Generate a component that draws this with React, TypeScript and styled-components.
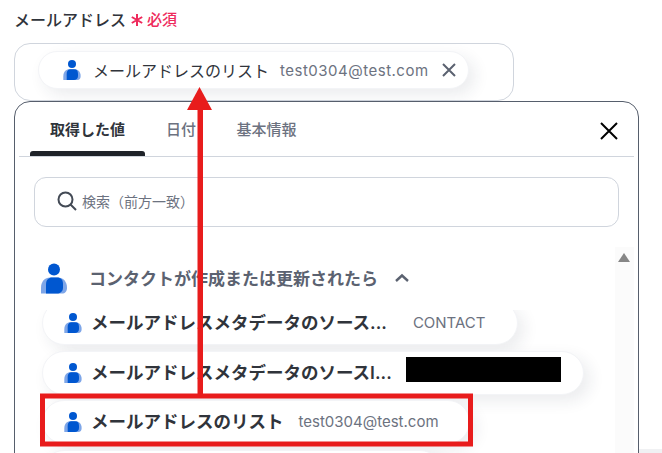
import React from "react";
import styled, { createGlobalStyle } from "styled-components";

const FONT = `Inter, Roboto, "Noto Sans CJK JP", sans-serif`;

const Global = createGlobalStyle`
  html, body { margin: 0; padding: 0; background: #fff; overflow: hidden; }
  body { width: 662px; height: 453px; font-family: ${FONT}; }
  * { box-sizing: border-box; }
`;

const Page = styled.div`
  position: relative;
  width: 662px;
  height: 453px;
  overflow: hidden;
  padding: 8px 0 0 14px;
  &::after {
    content: "";
    position: absolute;
    left: 639px;
    top: 449px;
    width: 23px;
    height: 4px;
    background: #f0f1f3;
  }
`;
const LabelRow = styled.div`
  display: flex;
  align-items: center;
  height: 21px;
  font-size: 16px;
  font-weight: 500;
  color: #30343b;
`;
const Star = styled.svg`
  margin: 2px 4px 0 5px;
`;
const Required = styled.span`
  color: #ee2a5c;
  font-size: 15px;
  font-weight: 500;
`;
const Field = styled.div`
  width: 500px;
  height: 58px;
  margin-top: 14px;
  padding: 7px 0 0 23px;
  border: 1px solid #d0d5dd;
  border-radius: 16px;
`;
const Chip = styled.div<{ $w: number; $px?: number; $h?: number }>`
  display: flex;
  align-items: center;
  width: ${(p) => p.$w}px;
  height: ${(p) => p.$h ?? 44}px;
  padding-left: ${(p) => p.$px ?? 24}px;
  border-radius: 22px;
  background: #fff;
  box-shadow: 6px 6px 16px rgba(30, 40, 70, 0.09);
  border: 1px solid #f3f4f7;
  flex-shrink: 0;
`;
const ChipName = styled.span`
  font-size: 16px;
  font-weight: 400;
  color: #30343b;
  margin-left: 12px;
  white-space: nowrap;
`;
const ChipValue = styled.span`
  font-size: 15px;
  letter-spacing: 0.5px;
  color: #6c7280;
  margin-left: 11px;
  white-space: nowrap;
`;
const ClearIcon = styled.svg`
  margin-left: 12px;
  flex-shrink: 0;
`;
const Panel = styled.div`
  width: 625px;
  height: 420px;
  padding: 0 4px;
  border: 1px solid #565e6c;
  border-radius: 16px;
  background: #fff;
`;
const TabBar = styled.div`
  display: flex;
  align-items: stretch;
  justify-content: space-between;
  height: 55px;
  border-bottom: 1px solid #d0d5dd;
`;
const Tabs = styled.div`
  display: flex;
  padding-left: 11px;
`;
const Tab = styled.div<{ $active?: boolean; $w: number }>`
  position: relative;
  display: flex;
  align-items: center;
  justify-content: center;
  width: ${(p) => p.$w}px;
  padding-bottom: 2px;
  font-size: 15px;
  font-weight: ${(p) => (p.$active ? 600 : 500)};
  color: ${(p) => (p.$active ? "#30343b" : "#6c7280")};
  &::after {
    content: "";
    display: ${(p) => (p.$active ? "block" : "none")};
    position: absolute;
    left: 0;
    right: 0;
    bottom: 0;
    height: 5px;
    border-radius: 3px 3px 0 0;
    background: #1f2329;
  }
`;
const CloseIcon = styled.svg`
  margin: 20px 16px 0 0;
`;
const SearchBox = styled.div`
  display: flex;
  align-items: center;
  height: 50px;
  margin: 20px 15px 0 15px;
  padding: 0 0 2px 22px;
  border: 1px solid #d0d5dd;
  border-radius: 12px;
  font-size: 14px;
  color: #6c7280;
`;
const SearchText = styled.span`
  margin-left: 5px;
`;
const Body = styled.div`
  display: flex;
  margin-top: 20px;
`;
const Content = styled.div`
  width: 596px;
`;
const GroupHeader = styled.div`
  display: flex;
  align-items: center;
  height: 63px;
  padding-left: 22px;
  font-size: 17px;
  font-weight: 600;
  color: #5b6270;
`;
const GroupTitle = styled.span`
  margin: 0 0 3px 22px;
`;
const Chevron = styled.svg`
  margin: 0 0 2px 16px;
`;
const List = styled.div`
  display: flex;
  flex-direction: column;
  gap: 5.5px;
  height: 200px;
  padding: 0 0 0 23px;
  overflow: hidden;
`;
const ItemClip = styled.div`
  margin-top: -9px;
`;
const ItemName = styled.span`
  font-size: 17.5px;
  font-weight: 600;
  color: #30343b;
  margin: 0 0 3px 9px;
  white-space: nowrap;
`;
const ItemValue = styled.span<{ $ml: number }>`
  font-size: 15px;
  color: #6c7280;
  margin: 0 0 2px ${(p) => p.$ml}px;
  white-space: nowrap;
`;
const Redacted = styled.div`
  width: 155px;
  height: 25px;
  margin: 0 0 6px 14px;
  background: #000;
`;
const Track = styled.div`
  position: relative;
  width: 19px;
  height: 210px;
  background: #fbfbfb;
  flex-shrink: 0;
`;
const TrackArrow = styled.div`
  position: absolute;
  left: 3px;
  top: 6px;
  width: 0;
  height: 0;
  border-left: 6.5px solid transparent;
  border-right: 6.5px solid transparent;
  border-bottom: 9px solid #868686;
`;
const Annotation = styled.svg`
  position: absolute;
  left: 0;
  top: 0;
  pointer-events: none;
`;

const Person = ({ size = 18, h = 20 }: { size?: number; h?: number }) => (
  <svg width={size} height={h} viewBox="0 0 26 30" style={{ flexShrink: 0 }}>
    <circle cx="13" cy="6" r="6" fill="#0057d0" />
    <path d="M0 30 V24 C0 18 4 14 9 14 H17 C22 14 26 18 26 24 C26 28 24 30 21 30 Z" fill="#7ea6e8" />
    <path d="M5 30 V21 C5 16 8 14 11 14 H16 C20 14 22 16 22 21 V24 C22 28 19 30 16 30 Z" fill="#0057d0" />
  </svg>
);

export default function App() {
  return (
    <>
      <Global />
      <Page>
        <LabelRow>
          メールアドレス
          <Star width="12" height="12" viewBox="0 0 12 12">
            <path d="M6 0 V12 M0.8 3 L11.2 9 M11.2 3 L0.8 9" stroke="#ee2a5c" strokeWidth="2" />
          </Star>
          <Required>必須</Required>
        </LabelRow>
        <Field>
          <Chip $w={431} $h={38}>
            <Person />
            <ChipName>メールアドレスのリスト</ChipName>
            <ChipValue>test0304@test.com</ChipValue>
            <ClearIcon width="16" height="16" viewBox="0 0 16 16">
              <path d="M2 2 L14 14 M14 2 L2 14" stroke="#5b6270" strokeWidth="2" />
            </ClearIcon>
          </Chip>
        </Field>
        <Panel>
          <TabBar>
            <Tabs>
              <Tab $active $w={115}>取得した値</Tab>
              <Tab $w={72}>日付</Tab>
              <Tab $w={99}>基本情報</Tab>
            </Tabs>
            <CloseIcon width="18" height="18" viewBox="0 0 18 18">
              <path d="M1 1 L17 17 M17 1 L1 17" stroke="#000" strokeWidth="2" />
            </CloseIcon>
          </TabBar>
          <SearchBox>
            <svg width="20" height="20" viewBox="0 0 20 20">
              <circle cx="8.5" cy="8.5" r="7" fill="none" stroke="#434a55" strokeWidth="2" />
              <path d="M13.5 13.5 L19 19" stroke="#434a55" strokeWidth="2" />
            </svg>
            <SearchText>検索（前方一致）</SearchText>
          </SearchBox>
          <Body>
            <Content>
              <GroupHeader>
                <Person size={26} h={31} />
                <GroupTitle>コンタクトが作成または更新されたら</GroupTitle>
                <Chevron width="16" height="10" viewBox="0 0 16 10">
                  <path d="M2 8 L8 2.5 L14 8" fill="none" stroke="#5b6270" strokeWidth="2.4" />
                </Chevron>
              </GroupHeader>
              <List>
                <ItemClip>
                  <Chip $w={476} $px={21}>
                    <Person />
                    <ItemName>メールアドレスメタデータのソース...</ItemName>
                    <ItemValue $ml={26}>CONTACT</ItemValue>
                  </Chip>
                </ItemClip>
                <Chip $w={542} $px={21}>
                  <Person />
                  <ItemName>メールアドレスメタデータのソースI...</ItemName>
                  <Redacted />
                </Chip>
                <Chip $w={428} $px={21}>
                  <Person />
                  <ItemName>メールアドレスのリスト</ItemName>
                  <ItemValue $ml={15}>test0304@test.com</ItemValue>
                </Chip>
                <Chip $w={400} $px={21} />
              </List>
            </Content>
            <Track>
              <TrackArrow />
            </Track>
          </Body>
        </Panel>
        <Annotation width="662" height="453" viewBox="0 0 662 453">
          <rect x="197.5" y="110" width="5.5" height="286" fill="#e81c1c" />
          <polygon points="199.5,87 212,110 187,110" fill="#e81c1c" />
          <rect x="42.5" y="396" width="428" height="48" fill="none" stroke="#e81c1c" strokeWidth="5" />
        </Annotation>
      </Page>
    </>
  );
}
